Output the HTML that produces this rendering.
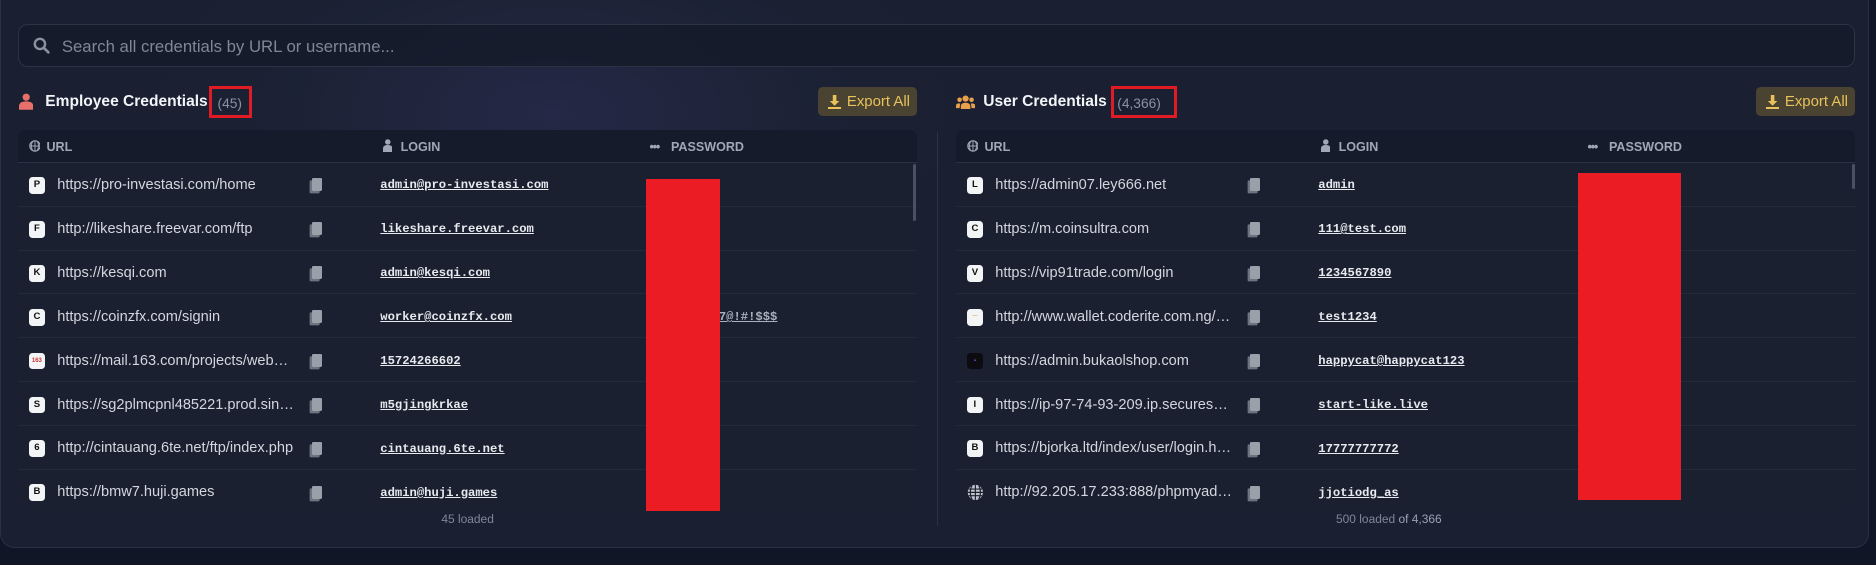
<!DOCTYPE html>
<html><head><meta charset="utf-8"><style>
*{box-sizing:border-box;margin:0;padding:0}
html,body{width:1876px;height:565px;overflow:hidden;background:#111627}
#w{zoom:1.19643;width:1568px;height:472px;position:relative;font-family:"Liberation Sans",sans-serif}
.panel{position:absolute;left:0;top:0;width:1562px;height:458px;border:1px solid #2a3142;border-top:none;border-radius:0 0 12px 12px;background:radial-gradient(ellipse 420px 220px at 460px 95px,#252846 0%,#1b2133 60%,#1a2031 100%);overflow:hidden}
.search{position:absolute;left:14px;top:20px;width:1536px;height:36px;border:1px solid #2b3345;border-radius:8px;background:rgba(20,26,40,.75)}
.search span{position:absolute;left:36px;top:10px;font-size:14px;color:#7f8796}
.abs{position:absolute}
.title{font-size:13px;font-weight:bold;color:#f2f4f8}
.cnt{font-size:11.5px;color:#8a92a2}
.rbox{position:absolute;border:3px solid #e01b24}
.exp{position:absolute;width:83px;height:24px;border-radius:4px;background:#4a4331;color:#e8c25a;font-size:12.5px;line-height:25px;padding-left:24px}
.tbl{position:absolute;top:109px;width:752px;height:318px;background:#1a2030;border-radius:6px 6px 0 0;overflow:hidden}
.th{height:27px;background:#151b2a;border-bottom:1px solid #2a3142;position:relative;font-size:10.5px;font-weight:bold;color:#a0a8b6}
.th span{position:absolute;top:8px}
.row{height:36.7px;border-bottom:1px solid #232a3a;position:relative}
.fav{position:absolute;left:9px;top:12px;width:14px;height:14px;background:#f3f4f6;border-radius:3px;font-size:8px;font-weight:bold;color:#111;text-align:center;line-height:14px}
.url{position:absolute;left:33px;top:12px;width:198px;font-size:12.2px;color:#d2d6de;white-space:nowrap;overflow:hidden;text-overflow:ellipsis}
.cp{position:absolute;left:246px;top:13px;width:8px;height:11px;background:#9aa0aa;border-radius:1px;box-shadow:-2px 2px 0 0 #6d7380}
.lg{position:absolute;left:303px;top:13px;font-family:"Liberation Mono",monospace;font-size:10.2px;font-weight:bold;color:#e8eaee;text-decoration:underline}
.red{position:absolute;background:#ec1c24}
.foot{position:absolute;top:428px;font-size:10px;color:#7f8796;text-align:center}
.sb{position:absolute;width:3px;background:#4a5162;border-radius:2px}
</style></head><body><div id="w">
<div class="panel">
<div class="search"><svg class="abs" style="left:12px;top:10px" width="14" height="14" viewBox="0 0 14 14"><circle cx="5.8" cy="5.8" r="4.3" stroke="#8a92a2" stroke-width="2" fill="none"/><path d="M9 9l3.8 3.8" stroke="#8a92a2" stroke-width="2.2" stroke-linecap="round"/></svg><span>Search all credentials by URL or username...</span></div>

<!-- left -->
<svg class="abs" style="left:15px;top:78px" width="12" height="14" viewBox="0 0 12 14"><circle cx="6" cy="3.5" r="3" fill="#e8706a"/><path d="M0 14v-3c0-2.5 2-4 6-4s6 1.5 6 4v3z" fill="#e8706a"/></svg>
<div class="abs title" style="left:37px;top:78px">Employee Credentials</div>
<div class="abs cnt" style="left:181px;top:80px">(45)</div>
<div class="rbox" style="left:174px;top:72px;width:36px;height:27px"></div>
<div class="exp" style="left:683px;top:73px"><svg class="abs" style="left:8px;top:6px" width="11" height="12" viewBox="0 0 11 12"><path d="M4 0h3v5h2.5L5.5 9 1.5 5H4z M0 10h11v2H0z" fill="#e8c25a"/></svg>Export All</div>
<div class="tbl" style="left:14px">
<div class="th"><svg class="abs" style="left:9px;top:8px" width="10" height="10" viewBox="0 0 10 10"><circle cx="5" cy="5" r="4.3" stroke="#a0a8b6" fill="none"/><path d="M1 5h8M5 1v8M3 1.5c-1.3 2-1.3 5 0 7M7 1.5c1.3 2 1.3 5 0 7" stroke="#a0a8b6" fill="none" stroke-width=".8"/></svg><span style="left:24px">URL</span>
<svg class="abs" style="left:305px;top:7px" width="8" height="11" viewBox="0 0 8 11"><circle cx="4" cy="2.5" r="2.3" fill="#a0a8b6"/><path d="M0 11V8c0-2 1.5-3 4-3s4 1 4 3v3z" fill="#a0a8b6"/></svg><span style="left:320px">LOGIN</span>
<span style="left:528px;letter-spacing:-1px">•••</span><span style="left:546px">PASSWORD</span></div>
<div class="row"><div class="fav">P</div><div class="url">https://pro-investasi.com/home</div><div class="cp"></div><div class="lg">admin@pro-investasi.com</div></div>
<div class="row"><div class="fav">F</div><div class="url">http://likeshare.freevar.com/ftp</div><div class="cp"></div><div class="lg">likeshare.freevar.com</div></div>
<div class="row"><div class="fav">K</div><div class="url">https://kesqi.com</div><div class="cp"></div><div class="lg">admin@kesqi.com</div></div>
<div class="row"><div class="fav">C</div><div class="url">https://coinzfx.com/signin</div><div class="cp"></div><div class="lg">worker@coinzfx.com</div><div class="lg" style="left:586px;color:#aab0bc">7@!#!$$$</div></div>
<div class="row"><div class="fav" style="color:#c33;font-size:5px">163</div><div class="url">https://mail.163.com/projects/webmail</div><div class="cp"></div><div class="lg">15724266602</div></div>
<div class="row"><div class="fav">S</div><div class="url">https://sg2plmcpnl485221.prod.sin2.secureserver.net</div><div class="cp"></div><div class="lg">m5gjingkrkae</div></div>
<div class="row"><div class="fav">6</div><div class="url">http://cintauang.6te.net/ftp/index.php</div><div class="cp"></div><div class="lg">cintauang.6te.net</div></div>
<div class="row"><div class="fav">B</div><div class="url">https://bmw7.huji.games</div><div class="cp"></div><div class="lg">admin@huji.games</div></div>
</div>
<div class="sb" style="left:762px;top:137px;height:48px"></div>
<div class="red" style="left:539px;top:150px;width:62px;height:277px"></div>
<div class="foot" style="left:340px;width:100px">45 loaded</div>
<div class="abs" style="left:782px;top:110px;width:1px;height:330px;background:#2c3344"></div>

<!-- right -->
<svg class="abs" style="left:798px;top:79px" width="16" height="12" viewBox="0 0 16 12"><circle cx="8" cy="3" r="2.6" fill="#e8a04a"/><circle cx="3" cy="4" r="1.9" fill="#e8a04a"/><circle cx="13" cy="4" r="1.9" fill="#e8a04a"/><path d="M4 12V9.5c0-2 1.6-3 4-3s4 1 4 3V12z M0 11V9c0-1.5 1-2 3-2l.5 .2L3 11z M16 11V9c0-1.5-1-2-3-2l-.5.2L13 11z" fill="#e8a04a"/></svg>
<div class="abs title" style="left:821px;top:78px">User Credentials</div>
<div class="abs cnt" style="left:933px;top:80px">(4,366)</div>
<div class="rbox" style="left:928px;top:72px;width:55px;height:27px"></div>
<div class="exp" style="left:1467px;top:73px"><svg class="abs" style="left:8px;top:6px" width="11" height="12" viewBox="0 0 11 12"><path d="M4 0h3v5h2.5L5.5 9 1.5 5H4z M0 10h11v2H0z" fill="#e8c25a"/></svg>Export All</div>
<div class="tbl" style="left:798px">
<div class="th"><svg class="abs" style="left:9px;top:8px" width="10" height="10" viewBox="0 0 10 10"><circle cx="5" cy="5" r="4.3" stroke="#a0a8b6" fill="none"/><path d="M1 5h8M5 1v8M3 1.5c-1.3 2-1.3 5 0 7M7 1.5c1.3 2 1.3 5 0 7" stroke="#a0a8b6" fill="none" stroke-width=".8"/></svg><span style="left:24px">URL</span>
<svg class="abs" style="left:305px;top:7px" width="8" height="11" viewBox="0 0 8 11"><circle cx="4" cy="2.5" r="2.3" fill="#a0a8b6"/><path d="M0 11V8c0-2 1.5-3 4-3s4 1 4 3v3z" fill="#a0a8b6"/></svg><span style="left:320px">LOGIN</span>
<span style="left:528px;letter-spacing:-1px">•••</span><span style="left:546px">PASSWORD</span></div>
<div class="row"><div class="fav">L</div><div class="url">https://admin07.ley666.net</div><div class="cp"></div><div class="lg">admin</div></div>
<div class="row"><div class="fav">C</div><div class="url">https://m.coinsultra.com</div><div class="cp"></div><div class="lg">111@test.com</div></div>
<div class="row"><div class="fav">V</div><div class="url">https://vip91trade.com/login</div><div class="cp"></div><div class="lg">1234567890</div></div>
<div class="row"><div class="fav" style="font-size:4px;color:#d9a020">—</div><div class="url">http://www.wallet.coderite.com.ng/login</div><div class="cp"></div><div class="lg">test1234</div></div>
<div class="row"><div class="fav" style="background:#0b0b10;color:#7755cc;font-size:5px">▪</div><div class="url">https://admin.bukaolshop.com</div><div class="cp"></div><div class="lg">happycat@happycat123</div></div>
<div class="row"><div class="fav">I</div><div class="url">https://ip-97-74-93-209.ip.secureserver.net</div><div class="cp"></div><div class="lg">start-like.live</div></div>
<div class="row"><div class="fav">B</div><div class="url">https://bjorka.ltd/index/user/login.html</div><div class="cp"></div><div class="lg">17777777772</div></div>
<div class="row"><svg class="abs" style="left:9px;top:12px" width="14" height="14" viewBox="0 0 10 10"><circle cx="5" cy="5" r="4.5" fill="#c0c4cc"/><path d="M.5 5h9M5 .5v9M3 1c-1.3 2-1.3 6 0 8M7 1c1.3 2 1.3 6 0 8M1 3h8M1 7h8" stroke="#1a2030" fill="none" stroke-width=".7"/></svg><div class="url">http://92.205.17.233:888/phpmyadmin</div><div class="cp"></div><div class="lg">jjotiodg_as</div></div>
</div>
<div class="sb" style="left:1547px;top:137px;height:21px"></div>
<div class="red" style="left:1318px;top:145px;width:86px;height:273px"></div>
<div class="foot" style="left:1100px;width:120px">500 loaded <span style="color:#9aa2b0">of 4,366</span></div>
</div>
</div></body></html>
